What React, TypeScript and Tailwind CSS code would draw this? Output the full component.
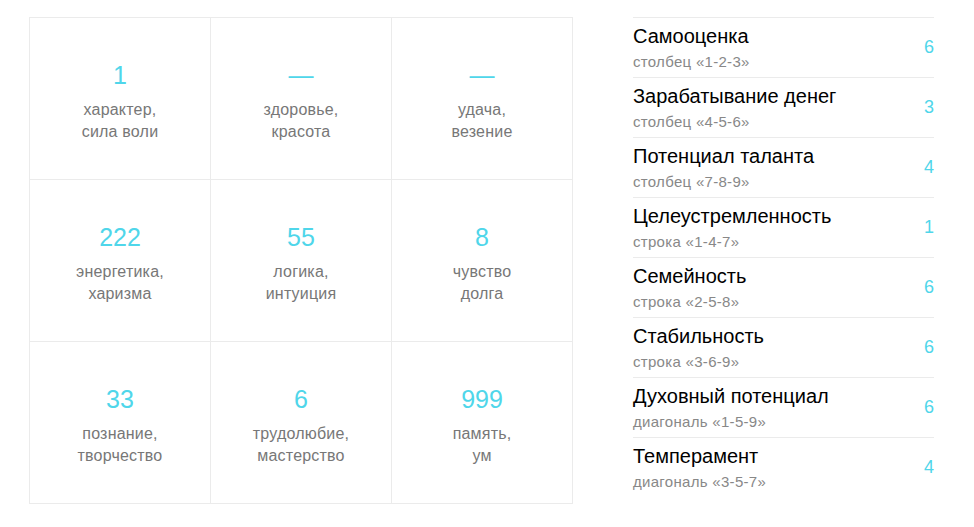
const cells = [
  { value: '1', label: ['характер,', 'сила воли'] },
  { value: '—', label: ['здоровье,', 'красота'] },
  { value: '—', label: ['удача,', 'везение'] },
  { value: '222', label: ['энергетика,', 'харизма'] },
  { value: '55', label: ['логика,', 'интуиция'] },
  { value: '8', label: ['чувство', 'долга'] },
  { value: '33', label: ['познание,', 'творчество'] },
  { value: '6', label: ['трудолюбие,', 'мастерство'] },
  { value: '999', label: ['память,', 'ум'] },
];

const traits = [
  { title: 'Самооценка', sub: 'столбец «1-2-3»', value: 6 },
  { title: 'Зарабатывание денег', sub: 'столбец «4-5-6»', value: 3 },
  { title: 'Потенциал таланта', sub: 'столбец «7-8-9»', value: 4 },
  { title: 'Целеустремленность', sub: 'строка «1-4-7»', value: 1 },
  { title: 'Семейность', sub: 'строка «2-5-8»', value: 6 },
  { title: 'Стабильность', sub: 'строка «3-6-9»', value: 6 },
  { title: 'Духовный потенциал', sub: 'диагональ «1-5-9»', value: 6 },
  { title: 'Темперамент', sub: 'диагональ «3-5-7»', value: 4 },
];

export default function App() {
  return (
    <div className="min-h-screen bg-white font-['Liberation_Sans',Arial,sans-serif]">
      <div className="flex items-start gap-[60px] pl-[29px] pt-[17px]">
        {/* psychomatrix square */}
        <div className="grid w-[544px] grid-cols-3 border-l border-t border-[#ebebeb]">
          {cells.map((c, i) => (
            <div
              key={i}
              className="flex h-[162px] flex-col items-center justify-center border-b border-r border-[#ebebeb] pt-[5px] text-center"
            >
              <div className="text-[25px] leading-[30px] text-[#4fd6ea]">{c.value}</div>
              <div className="mt-[9px] text-[16px] leading-[22px] tracking-[0.2px] text-[#777]">
                {c.label[0]}
                <br />
                {c.label[1]}
              </div>
            </div>
          ))}
        </div>

        {/* traits list */}
        <ul className="w-[301px]">
          {traits.map((t) => (
            <li
              key={t.title}
              className="flex h-[60px] items-center justify-between border-t border-[#ebebeb]"
            >
              <div className="pb-[1px]">
                <div className="text-[20px] leading-[24px] text-black">{t.title}</div>
                <div className="mt-[5px] text-[15px] leading-[18px] tracking-[0.3px] text-[#888]">{t.sub}</div>
              </div>
              <div className="text-[18px] text-[#4fd6ea]">{t.value}</div>
            </li>
          ))}
        </ul>
      </div>
    </div>
  );
}
